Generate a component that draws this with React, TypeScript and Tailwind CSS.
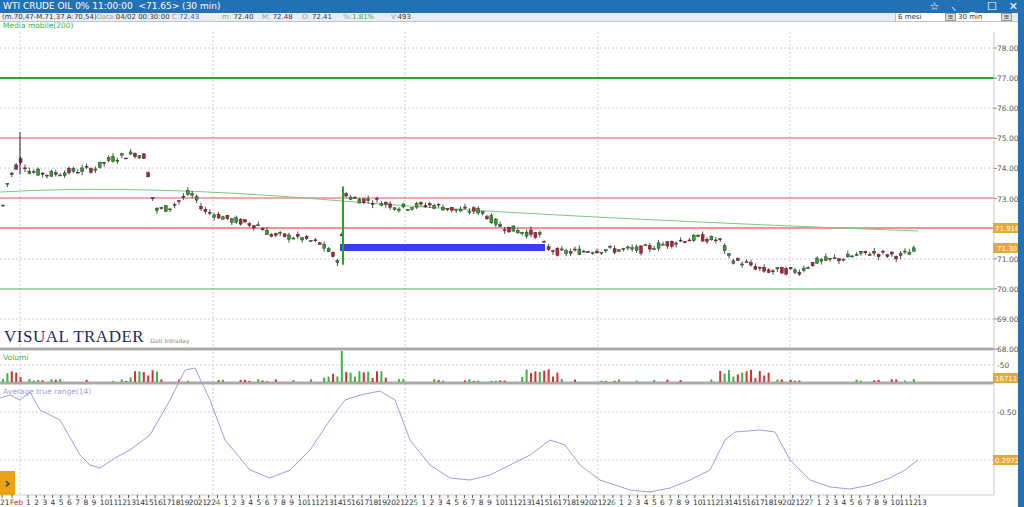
import React from "react";

const W = 994;
const py = (p: number) => 48 + (78 - p) * 30.1;

const path: [number, number][] = [
  [2, 72.6], [8, 73.6], [20, 74.3], [30, 73.9], [50, 73.8], [70, 73.9], [95, 74.0], [110, 74.3], [135, 74.5], [145, 74.4],
  [150, 73.5], [155, 72.6], [170, 72.7], [190, 73.2], [205, 72.6], [230, 72.3], [260, 72.1], [270, 71.8], [300, 71.7],
  [320, 71.5], [330, 71.2], [340, 70.9], [345, 73.2], [352, 73.0], [380, 72.9], [400, 72.7], [430, 72.8], [460, 72.6],
  [480, 72.6], [500, 72.1], [520, 71.9], [540, 71.8], [545, 71.4], [560, 71.2], [600, 71.3], [640, 71.3], [680, 71.6],
  [700, 71.7], [720, 71.6], [730, 71.0], [750, 70.8], [765, 70.6], [800, 70.6], [815, 70.9], [840, 71.0], [870, 71.2],
  [900, 71.1], [918, 71.3],
];
const interp = (x: number) => {
  for (let i = 0; i < path.length - 1; i++) {
    const [x0, y0] = path[i], [x1, y1] = path[i + 1];
    if (x >= x0 && x <= x1) return y0 + ((y1 - y0) * (x - x0)) / (x1 - x0);
  }
  return path[path.length - 1][1];
};
let seed = 7;
const rnd = () => { seed = (seed * 9301 + 49297) % 233280; return seed / 233280; };
const candles: { x: number; o: number; c: number; h: number; l: number }[] = [];
for (let x = 3; x <= 918; x += 4.4) {
  const m = interp(x);
  const o = m + (rnd() - 0.5) * 0.25, c = m + (rnd() - 0.5) * 0.25;
  candles.push({ x, o, c, h: Math.max(o, c) + rnd() * 0.12, l: Math.min(o, c) - rnd() * 0.12 });
}
const vols = candles.map((c) => {
  const big = (c.x > 130 && c.x < 160) || (c.x > 320 && c.x < 390) || (c.x > 720 && c.x < 770) || (c.x > 520 && c.x < 560) || c.x < 25;
  return { x: c.x, h: big ? 3 + rnd() * 10 : rnd() < 0.35 ? 1 + rnd() * 2 : 0, g: c.c > c.o };
});
const bi = Math.floor((342 - 3) / 4.4);
vols[bi].h = 31; vols[bi].g = true;

const atr: [number, number][] = [[0,398],[10,395],[20,400],[30,392],[40,410],[60,420],[80,455],[90,465],[100,468],[115,458],[130,450],[150,435],[170,400],[185,370],[195,368],[210,400],[225,440],[250,470],[270,478],[290,470],[310,450],[330,420],[345,400],[360,395],[380,391],[395,400],[410,440],[430,465],[450,478],[470,480],[490,475],[510,465],[530,455],[550,440],[565,445],[580,465],[600,480],[630,490],[650,492],[670,488],[690,480],[710,470],[725,440],[735,432],[760,430],[775,432],[790,460],[810,480],[830,487],[850,489],[870,485],[890,478],[905,470],[918,460]];

const priceLabels = [[78, "78.00"], [77, "77.00"], [76, "76.00"], [75, "75.00"], [74, "74.00"], [73, "73.00"], [71, "71.00"], [70, "70.00"], [69, "69.00"], [68, "68.00"]] as const;

const dateLabels: { x: number; t: string; c: string }[] = [];
{
  dateLabels.push({ x: 0, t: "21", c: "#333" });
  dateLabels.push({ x: 10, t: "Feb", c: "#d22" });
  let x = 26;
  const marks = ["4", "5", "6", "7"];
  let sec = 0;
  while (x < 925) {
    for (let d = 1; d <= 22 && x < 925; d++) { dateLabels.push({ x, t: String(d), c: "#333" }); x += d >= 10 ? 8.9 : 8.2; }
    if (x < 925 && sec < marks.length) { dateLabels.push({ x, t: marks[sec++], c: "#2a2" }); x += 8.2; }
  }
}

export default function App() {
  return (
    <div className="w-[1024px] h-[507px] overflow-hidden bg-white flex flex-col" style={{ fontFamily: "Tahoma, 'DejaVu Sans', sans-serif" }}>
      <div className="h-[13px] bg-[#2271b5] flex items-center justify-between pl-[3px] pr-[6px] text-white text-[9px] leading-none">
        <span>WTI CRUDE OIL 0% 11:00:00 &nbsp;&lt;71.65&gt; (30 min)</span>
        <div className="flex items-center gap-[12px] text-[11px]">
          <span>☆</span><span>⸜</span><span>_</span><span>☐</span><span>✕</span>
        </div>
      </div>
      <div className="flex flex-1 min-h-0">
        <div className="flex-1 flex flex-col min-w-0">
          <div className="h-[9px] bg-[#e8eef4] border-b border-[#b9c4cf] flex items-center text-[7px] leading-none text-[#333] pl-[2px]">
            <span className="w-[220px]">(m.70,47-M.71,37 A:70,54)<span className="text-[#999]">Data:</span>04/02 00:30:00 <span className="text-[#999]">C:</span><span className="text-[#2255cc]">72.43</span></span>
            <span className="w-[40px]"><span className="text-[#999]">m:</span> 72.40</span>
            <span className="w-[40px]"><span className="text-[#999]">M:</span> 72.48</span>
            <span className="w-[41px]"><span className="text-[#999]">O:</span> 72.41</span>
            <span className="w-[48px]"><span className="text-[#999]">%:</span><span className="text-[#3a3]">1.81%</span></span>
            <span><span className="text-[#999]">V:</span>493</span>
            <div className="ml-auto flex h-full mr-[6px]">
              <div className="w-[50px] bg-white border-l border-[#bbb] pl-[2px] flex items-center">6 mesi</div>
              <div className="w-[11px] bg-[#ddd] border border-[#999] text-center">≡</div>
              <div className="w-[45px] bg-white pl-[2px] flex items-center">30 min</div>
              <div className="w-[11px] bg-[#ddd] border border-[#999] text-center">≡</div>
            </div>
          </div>
          <div className="relative flex-1">
            <svg width={1018} height={507} className="absolute left-0" style={{ top: -22 }}>
              <g stroke="#ccc" strokeDasharray="2 2" strokeWidth={1}>
                {[48, 108, 168, 259, 319].map((y) => <line key={y} x1={0} x2={W} y1={y} y2={y} />)}
                {[365, 412, 460].map((y) => <line key={y} x1={0} x2={W} y1={y} y2={y} />)}
                {[20, 213, 405, 598, 790].map((x) => <line key={x} x1={x} x2={x} y1={32} y2={495} />)}
              </g>
              <line x1={0} x2={W} y1={78} y2={78} stroke="#2ea52e" strokeWidth={2} />
              <line x1={0} x2={W} y1={138} y2={138} stroke="#e05555" />
              <line x1={0} x2={W} y1={198} y2={198} stroke="#e05555" />
              <line x1={0} x2={W} y1={228} y2={228} stroke="#f07070" strokeWidth={1.5} />
              <line x1={0} x2={W} y1={289} y2={289} stroke="#4cb04c" />
              <path d="M0 192 Q140 184 330 200 T918 231" fill="none" stroke="#7dc97d" strokeWidth={1} />
              <rect x={340} y={244} width={205} height={7} fill="#3b3bef" />
              {candles.map((c, i) => {
                const up = c.c >= c.o;
                const top = py(Math.max(c.o, c.c)), bot = py(Math.min(c.o, c.c));
                return (
                  <g key={i}>
                    <line x1={c.x} x2={c.x} y1={py(c.h)} y2={py(c.l)} stroke="#222" strokeWidth={0.8} />
                    <rect x={c.x - 1.5} y={top} width={3} height={Math.max(1, bot - top)} fill={up ? "#2d9d2d" : "#b8203a"} stroke="#222" strokeWidth={0.4} />
                  </g>
                );
              })}
              <line x1={20} x2={20} y1={py(75.2)} y2={py(73.8)} stroke="#222" />
              <line x1={343} x2={343} y1={py(70.8)} y2={py(73.4)} stroke="#2d9d2d" strokeWidth={2} />
              <line x1={0} x2={W} y1={349} y2={349} stroke="#aaa" strokeWidth={3} />
              <line x1={0} x2={W} y1={383} y2={383} stroke="#aaa" strokeWidth={3} />
              {vols.map((v, i) => v.h > 0 && <rect key={i} x={v.x - 1} y={382 - v.h} width={2} height={v.h} fill={v.g ? "#3cb43c" : "#d83030"} />)}
              <polyline points={atr.map((p) => p.join(",")).join(" ")} fill="none" stroke="#9c9ce0" strokeWidth={1} />
              <line x1={W} x2={W} y1={32} y2={495} stroke="#ccc" />
              <line x1={0} x2={W} y1={495} y2={495} stroke="#ccc" />
              <g fontSize={7.5} fill="#555" fontFamily="'DejaVu Sans', sans-serif">
                {priceLabels.map(([p, t]) => (
                  <g key={t}><line x1={W} x2={W + 3} y1={py(p)} y2={py(p)} stroke="#888" /><text x={W + 3} y={py(p) + 3}>{t}</text></g>
                ))}
                <text x={W + 3} y={368}>-50</text>
                <text x={W + 3} y={415}>-0.50</text>
              </g>
              <g fontSize={7} fontFamily="'DejaVu Sans', sans-serif">
                <rect x={W - 1} y={223} width={25} height={10} fill="#e8a833" /><text x={W + 1} y={231} fill="#fff">71.916</text>
                <rect x={W - 1} y={243} width={25} height={10} fill="#e8a833" /><text x={W + 3} y={251} fill="#fff">71.30</text>
                <rect x={W - 1} y={373} width={25} height={10} fill="#e8a833" /><text x={W + 1} y={381} fill="#fff">16711</text>
                <rect x={W - 1} y={455} width={25} height={10} fill="#e8a833" /><text x={W + 1} y={463} fill="#fff">0.2972</text>
              </g>
              <g fontSize={7.5} fontFamily="'DejaVu Sans', sans-serif">
                {dateLabels.map((d, i) => (
                  <g key={i}><line x1={d.x + 2} x2={d.x + 2} y1={495} y2={498} stroke="#555" /><text x={d.x} y={505} fill={d.c}>{d.t}</text></g>
                ))}
              </g>
            </svg>
            <div className="absolute left-[3px] top-[-2px] text-[7.5px] text-[#3cb43c]">Media mobile(200)</div>
            <div className="absolute left-[4px] top-[306px] flex items-end gap-[6px]">
              <span className="text-[17px] leading-none tracking-[0.5px] text-[#1c2a5a]" style={{ fontFamily: "'Liberation Serif', serif" }}>VISUAL TRADER</span>
              <span className="text-[6px] text-[#888]">Dati Intraday</span>
            </div>
            <div className="absolute left-[3px] top-[330px] text-[7.5px] text-[#3cb43c]">Volumi</div>
            <div className="absolute left-[3px] top-[364px] text-[7.5px] text-[#9c9ce0]">Average true range(14)</div>
            <div className="absolute left-0 top-[449px] w-[15px] h-[24px] bg-[#e9a319] flex items-center justify-center text-[#333] text-[14px] font-bold">›</div>
          </div>
        </div>
        <div className="w-[6px] bg-[#2271b5]" />
      </div>
    </div>
  );
}
